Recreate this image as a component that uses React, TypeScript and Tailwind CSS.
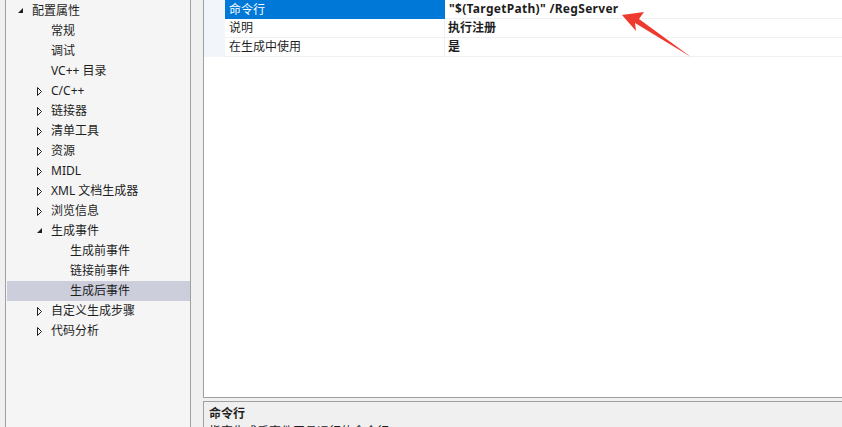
import React from "react";

const font = { fontFamily: '"Segoe UI", "Noto Sans", "Noto Sans CJK SC", sans-serif' };

type Node = { label: string; level: number; state?: "open" | "closed"; selected?: boolean };

const nodes: Node[] = [
  { label: "配置属性", level: 0, state: "open" },
  { label: "常规", level: 1 },
  { label: "调试", level: 1 },
  { label: "VC++ 目录", level: 1 },
  { label: "C/C++", level: 1, state: "closed" },
  { label: "链接器", level: 1, state: "closed" },
  { label: "清单工具", level: 1, state: "closed" },
  { label: "资源", level: 1, state: "closed" },
  { label: "MIDL", level: 1, state: "closed" },
  { label: "XML 文档生成器", level: 1, state: "closed" },
  { label: "浏览信息", level: 1, state: "closed" },
  { label: "生成事件", level: 1, state: "open" },
  { label: "生成前事件", level: 2 },
  { label: "链接前事件", level: 2 },
  { label: "生成后事件", level: 2, selected: true },
  { label: "自定义生成步骤", level: 1, state: "closed" },
  { label: "代码分析", level: 1, state: "closed" },
];

const pad = ["pl-[10px]", "pl-[29px]", "pl-[48px]"];

function Expander({ state }: { state?: "open" | "closed" }) {
  if (state === "open") {
    return (
      <svg width="8" height="8" viewBox="0 0 8 8" className="shrink-0">
        <polygon points="6,1 6,6 1,6" fill="#1e1e1e" />
      </svg>
    );
  }
  if (state === "closed") {
    return (
      <svg width="8" height="9" viewBox="0 0 8 9" className="shrink-0">
        <polygon points="1.5,0.5 5.5,4.5 1.5,8.5" fill="none" stroke="#1e1e1e" strokeWidth="1" />
      </svg>
    );
  }
  return <span className="w-[8px] shrink-0" />;
}

function Row({ name, value, selected }: { name: string; value: string; selected?: boolean }) {
  return (
    <div className="flex h-[19px]">
      <div className="w-[21px] shrink-0 bg-[#f2f5fa]" />
      <div
        className={
          selected
            ? "w-[220px] shrink-0 bg-[#0078d7] text-white pl-[4px] flex items-center border-r border-[#0078d7]"
            : "w-[220px] shrink-0 text-[#1e1e1e] pl-[4px] flex items-center border-b border-r border-[#eef0f4]"
        }
      >
        {name}
      </div>
      <div
        className={
          selected
            ? "flex-1 pl-[3px] flex items-center font-bold tracking-[0.3px] text-[#1e1e1e] border-b border-[#eef0f4] border-l border-l-white"
            : "flex-1 pl-[3px] flex items-center font-bold text-[#1e1e1e] border-b border-[#eef0f4]"
        }
      >
        {value}
      </div>
    </div>
  );
}

export default function App() {
  return (
    <div className="relative w-[842px] h-[427px] overflow-hidden flex bg-[#f0f0f0] text-[12px] leading-none" style={font}>
      {/* left strip */}
      <div className="w-[6px] shrink-0 bg-[#f0f0f0] border-r border-[#a0a0a0]" />
      {/* tree panel */}
      <div className="w-[185px] shrink-0 bg-[#f5f5f5] border-r border-[#a0a0a0] pt-px pl-px">
        {nodes.map((n) => (
          <div
            key={n.label}
            className={
              "h-[20px] flex items-center gap-[7px] text-[#1e1e1e] " +
              pad[n.level] +
              (n.selected ? " bg-[#cccedb]" : "")
            }
          >
            <Expander state={n.state} />
            <span>{n.label}</span>
          </div>
        ))}
      </div>
      {/* gap */}
      <div className="w-[12px] shrink-0" />
      {/* right */}
      <div className="flex-1 flex flex-col min-w-0">
        <div className="h-[398px] shrink-0 bg-white border-l border-b border-[#a0a0a0]">
          <Row name="命令行" value={'"$(TargetPath)" /RegServer'} selected />
          <Row name="说明" value="执行注册" />
          <Row name="在生成中使用" value="是" />
        </div>
        <div className="h-[3px] shrink-0" />
        <div className="flex-1 border-l border-t border-[#a0a0a0] bg-[#f0f0f0] pl-[5px] pt-[6px]">
          <div className="font-bold text-[#1e1e1e] h-[14px]">命令行</div>
          <div className="text-[#1e1e1e] mt-[4px]">指定生成后事件工具运行的命令行。</div>
        </div>
      </div>
      {/* red arrow */}
      <svg className="absolute left-0 top-0 pointer-events-none" width="842" height="427">
        <polygon points="622,15 644,12 639,19 691,57 635,23 636,31" fill="#ee3a2e" />
      </svg>
    </div>
  );
}
